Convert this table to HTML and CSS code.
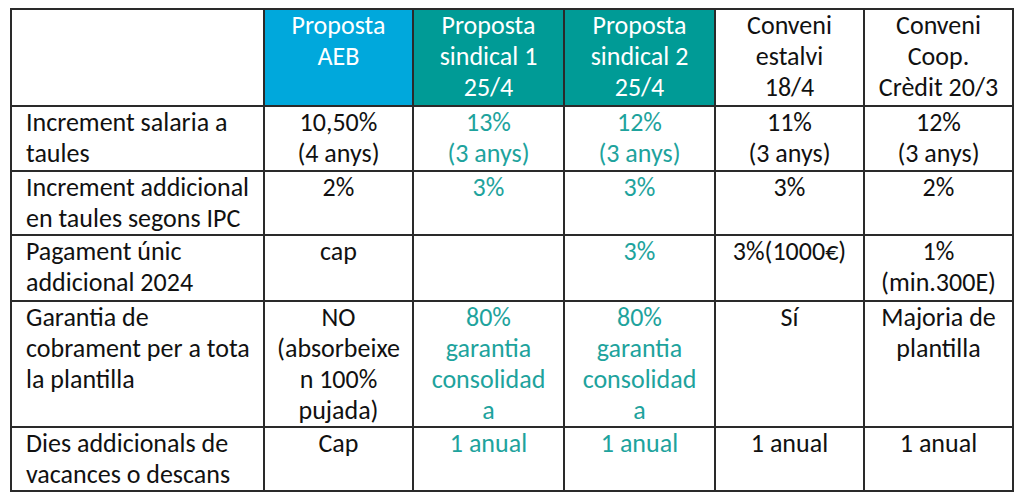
FILE: index.html
```html
<!DOCTYPE html>
<html lang="ca">
<head>
<meta charset="utf-8">
<title>Comparativa</title>
<link rel="stylesheet" href="styles.css">
</head>
<body>
<table class="cmp">
  <colgroup>
    <col class="c-label">
    <col class="c-val">
    <col class="c-val2">
    <col class="c-val2">
    <col class="c-val">
    <col class="c-val">
  </colgroup>
  <tr class="head">
    <th></th>
    <th class="blue">Proposta<br>AEB</th>
    <th class="teal">Proposta<br>sindical 1<br>25/4</th>
    <th class="teal">Proposta<br>sindical 2<br>25/4</th>
    <th>Conveni<br>estalvi<br>18/4</th>
    <th>Conveni<br>Coop.<br>Crèdit 20/3</th>
  </tr>
  <tr class="ra">
    <td class="lab">Increment salaria a<br>taules</td>
    <td>10,50%<br>(4 anys)</td>
    <td class="tt">13%<br>(3 anys)</td>
    <td class="tt">12%<br>(3 anys)</td>
    <td>11%<br>(3 anys)</td>
    <td>12%<br>(3 anys)</td>
  </tr>
  <tr class="rb">
    <td class="lab">Increment addicional<br>en taules segons IPC</td>
    <td>2%</td>
    <td class="tt">3%</td>
    <td class="tt">3%</td>
    <td>3%</td>
    <td>2%</td>
  </tr>
  <tr class="rc">
    <td class="lab">Pagament únic<br>addicional 2024</td>
    <td>cap</td>
    <td class="tt"></td>
    <td class="tt">3%</td>
    <td>3%(1000€)</td>
    <td>1%<br>(min.300E)</td>
  </tr>
  <tr class="rd">
    <td class="lab">Garantia de<br>cobrament per a tota<br>la plantilla</td>
    <td>NO<br>(absorbeixe<br>n 100%<br>pujada)</td>
    <td class="tt">80%<br>garantia<br>consolidad<br>a</td>
    <td class="tt">80%<br>garantia<br>consolidad<br>a</td>
    <td>Sí</td>
    <td>Majoria de<br>plantilla</td>
  </tr>
  <tr class="re">
    <td class="lab">Dies addicionals de<br>vacances o descans</td>
    <td>Cap</td>
    <td class="tt">1 anual</td>
    <td class="tt">1 anual</td>
    <td>1 anual</td>
    <td>1 anual</td>
  </tr>
</table>
</body>
</html>
```

FILE: styles.css
```css
html, body {
  margin: 0;
  padding: 0;
  background: #ffffff;
}
body {
  padding: 8px 0 0 10px;
  font-family: Carlito, Calibri, Lato, "Noto Sans", sans-serif;
  color: #111111;
}
.cmp {
  border-collapse: collapse;
  table-layout: fixed;
  width: 1002px;
  font-size: 26px;
  line-height: 31px;
}
.c-label { width: 253px; }
.c-val { width: 149px; }
.c-val2 { width: 151px; }
.cmp th, .cmp td {
  border: 2px solid #2a2a2a;
  padding: 0 2px;
  text-align: center;
  vertical-align: top;
  font-weight: normal;
  white-space: nowrap;
}
.head th { height: 95px; }
.ra td { height: 63px; }
.rb td { height: 62px; }
.rc td { height: 64px; }
.rd td { height: 124px; }
.re td { height: 57px; }
.cmp td.lab {
  text-align: left;
  padding-left: 14px;
}
.blue { background: #00a8dc; color: #ffffff; }
.teal { background: #009b96; color: #ffffff; }
.tt { color: #1ea39d; }
```
